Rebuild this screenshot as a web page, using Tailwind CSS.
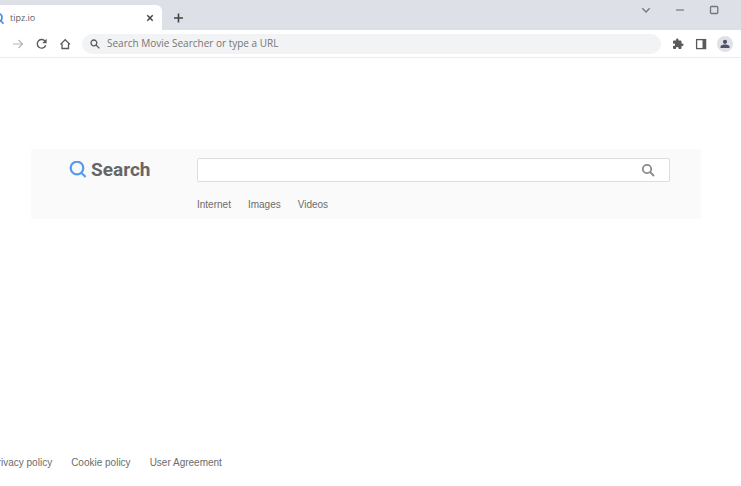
<!DOCTYPE html>
<html lang="en">
<head>
  <meta charset="UTF-8">
  <meta name="viewport" content="width=device-width, initial-scale=1.0">
  <title>tipz.io</title>
  <script src="https://cdn.jsdelivr.net/npm/@tailwindcss/browser@4"></script>
</head>
<body class="min-h-screen flex flex-col overflow-hidden bg-white text-[#6c6c6c] font-['Liberation_Sans',sans-serif]">

  <!-- Tab strip -->
  <header class="flex h-[30px] bg-[#dee0e7] font-['Open_Sans',sans-serif]">
    <div class="mt-[5px] -ml-2 w-[170px] flex items-center pr-1.5 bg-white rounded-tr-md">
      <svg class="w-3 h-3 shrink-0" viewBox="0 0 12 12" fill="none" stroke="#4a94ea" stroke-width="1.8"><circle cx="6" cy="5.5" r="4"/><path d="M8.5 8.500l3 3.200"/></svg>
      <span class="ml-1.5 flex-1 text-[9px] text-[#5f5f5f]">tipz.io</span>
      <button aria-label="Close tab" class="w-3 h-3 flex items-center justify-center">
        <svg class="w-2 h-2" viewBox="0 0 8 8" stroke="#444" stroke-width="1.5"><path d="M1.3 1.3l5.4 5.4M6.7 1.3L1.3 6.7"/></svg>
      </button>
    </div>
    <button aria-label="New tab" class="ml-2.5 mt-[5px] w-3 flex items-center justify-center">
      <svg class="w-3 h-3 shrink-0" viewBox="0 0 12 12" stroke="#444" stroke-width="1.6"><path d="M6.500 1.5v9M2 6h9"/></svg>
    </button>
    <div class="ml-auto mr-[22px] h-5 flex items-center gap-6">
      <button aria-label="Search tabs"><svg class="w-2.5 h-2.5" viewBox="0 0 10 10" fill="none" stroke="#74767b" stroke-width="1.3"><path d="M1.3 3.2L5 7l3.7-3.8"/></svg></button>
      <button aria-label="Minimize"><svg class="w-2.5 h-2.5" viewBox="0 0 10 10" stroke="#74767b" stroke-width="1.2"><path d="M1 5h8"/></svg></button>
      <button aria-label="Maximize"><svg class="w-2.5 h-2.5" viewBox="0 0 10 10" fill="none" stroke="#74767b" stroke-width="1.3"><rect x="1.500" y="1.500" width="7.300" height="7" rx="1"/></svg></button>
    </div>
  </header>

  <!-- Toolbar -->
  <div class="flex items-center h-7 pl-3 pr-2 border-b border-[#ececee] font-['Open_Sans',sans-serif]">
    <button aria-label="Forward"><svg class="w-3 h-3" viewBox="0 0 12 12" fill="none" stroke="#b5b5b5" stroke-width="1.2"><path d="M1 6h9.5M6.5 2l4 4-4 4"/></svg></button>
    <button aria-label="Reload" class="ml-3"><svg class="w-3 h-3" viewBox="0 0 12 12" fill="none" stroke="#5a5a5a" stroke-width="1.4"><path d="M9.3 3.6A4.3 4.3 0 1 0 9.700 7.200"/><path d="M10.600 .8v4.400H6.200z" fill="#5a5a5a" stroke="none"/></svg></button>
    <button aria-label="Home" class="ml-3"><svg class="w-3 h-3" viewBox="0 0 12 12" fill="none" stroke="#5a5a5a" stroke-width="1.3"><path d="M.4 6.400L5.200 1.700l4.800 4.700M2 5.500v5h6.500v-5"/></svg></button>
    <label class="ml-2.5 mr-2.5 flex-1 h-5 flex items-center rounded-full bg-[#f2f3f4] pl-2">
      <svg class="w-2.5 h-2.5 shrink-0" viewBox="0 0 10 10" fill="none" stroke="#5a5a5a" stroke-width="1.3"><circle cx="3.9" cy="3.9" r="2.9"/><path d="M6 6l3.4 3.4"/></svg>
      <input type="text" aria-label="Address bar" placeholder="Search Movie Searcher or type a URL" class="ml-[7px] flex-1 text-[10px] outline-none placeholder:text-[#767676]">
    </label>
    <div class="flex items-center gap-2.5">
      <button aria-label="Extensions" class="w-3.5 flex justify-center"><svg class="w-3 h-3" viewBox="0 0 24 24" fill="#5a5a5a"><path d="M20.5 11H19V7a2 2 0 0 0-2-2h-4V3.500a2.500 2.500 0 0 0-5 0V5H4a2 2 0 0 0-2 2v3.800h1.500a2.700 2.700 0 0 1 0 5.400H2V20a2 2 0 0 0 2 2h3.800v-1.500a2.700 2.700 0 0 1 5.400 0V22H17a2 2 0 0 0 2-2v-4h1.500a2.500 2.500 0 0 0 0-5z"/></svg></button>
      <button aria-label="Side panel"><svg class="w-3 h-3" viewBox="0 0 12 12"><rect x="1.600" y="1.600" width="9" height="9" fill="none" stroke="#5a5a5a" stroke-width="1.300"/><path d="M7.500 1.500h3v9h-3z" fill="#5a5a5a"/></svg></button>
      <button aria-label="Profile" class="w-4 h-4 flex items-center justify-center rounded-full bg-[#dfe1e6]"><svg class="w-2.5 h-2.5" viewBox="0 0 10 10" fill="#4c5268"><circle cx="5" cy="2.800" r="2.100"/><path d="M.5 9V7.800C.5 6.200 3.500 5.600 5 5.600s4.500.6 4.500 2.200V9z"/></svg></button>
    </div>
  </div>

  <!-- Search panel -->
  <main class="mt-[91px] ml-[31px] mr-10 h-[70px] flex bg-[#fafafa] pl-[38px] pr-[31px] pt-[9px]">
    <h1 class="w-32 h-6 shrink-0 flex items-center gap-1 text-[19px] font-bold text-[#666] font-[Roboto,sans-serif]">
      <svg class="w-[18px] h-[18px]" viewBox="0 0 18 18" fill="none" stroke="#559bf0" stroke-width="2.200"><circle cx="8" cy="7" r="6.300"/><path d="M12.300 11.700l4.300 4.300"/></svg>
      Search
    </h1>
    <div class="flex-1">
      <form class="h-6 flex items-center bg-white border border-[#ddd] rounded-xs pr-3.5">
        <input type="text" aria-label="Search" class="flex-1 px-2 text-xs outline-none">
        <button type="button" aria-label="Search"><svg class="w-3.5 h-3.5" viewBox="0 0 14 14" fill="none" stroke="#8a8a8a" stroke-width="1.800"><circle cx="6" cy="6" r="4.200"/><path d="M9 9l4 4"/></svg></button>
      </form>
      <nav class="mt-[17px] flex gap-[17px] text-[10px] leading-3">
        <a href="#">Internet</a>
        <a href="#">Images</a>
        <a href="#">Videos</a>
      </nav>
    </div>
  </main>

  <footer class="mt-auto mb-[17px] -ml-[9px] flex gap-[19px] text-[10px] leading-3">
    <a href="#">Privacy policy</a>
    <a href="#">Cookie policy</a>
    <a href="#">User Agreement</a>
  </footer>

</body>
</html>
